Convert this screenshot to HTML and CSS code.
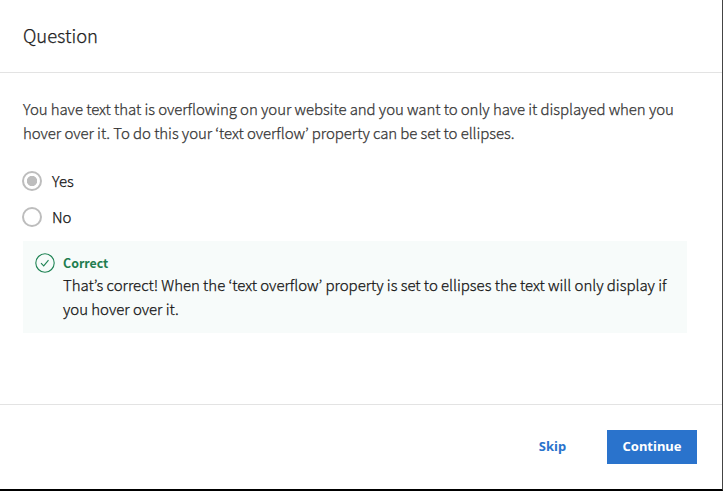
FILE: index.html
```html
<!DOCTYPE html>
<html lang="en">
<head>
<meta charset="utf-8">
<title>Question</title>
<link rel="stylesheet" href="styles.css">
</head>
<body>
<main class="dialog">
  <header class="header"><h1>Question</h1></header>
  <section class="body">
    <p class="prompt">You have text that is overflowing on your website and you want to only have it displayed when you<br>hover over it. To do this your ‘text overflow’ property can be set to ellipses.</p>
    <div class="options">
      <div class="option"><span class="radio radio-on"></span><span>Yes</span></div>
      <div class="option"><span class="radio"></span><span>No</span></div>
    </div>
    <div class="feedback">
      <svg class="check" viewBox="0 0 20 20" width="20" height="20"><circle cx="10" cy="10" r="9.2"/><path d="M6 10.2l2.7 2.7 4.8-5.7"/></svg>
      <div>
        <strong>Correct</strong>
        <p>That’s correct! When the ‘text overflow’ property is set to ellipses the text will only display if<br>you hover over it.</p>
      </div>
    </div>
  </section>
  <footer class="footer">
    <button class="skip">Skip</button>
    <button class="continue">Continue</button>
  </footer>
</main>
</body>
</html>
```
FILE: styles.css
```css
* { box-sizing: border-box; }
body { margin: 0; background: #fff; color: #333; font-family: "Noto Sans CJK KR", "Noto Sans", sans-serif; font-size: 15px; font-weight: 300; line-height: 24px; }
h1, p { margin: 0; font-weight: 300; }
h1, p, .option { -webkit-text-stroke: 0.25px currentColor; }
.dialog { height: 491px; display: flex; flex-direction: column; border-right: 1px solid #444; border-bottom: 2px solid #000; }
.header { height: 73px; padding: 21px 23px; border-bottom: 1px solid #e3e3e3; }
h1 { color: #222; font-size: 18.4px; line-height: 28px; }
.body { height: 331px; padding: 24px 35px 0 22px; }
.prompt { margin-left: 1px; white-space: nowrap; letter-spacing: -0.068px; font-variant-ligatures: normal; }
.options { padding-top: 24px; color: #111; }
.option { display: flex; align-items: center; gap: 10px; height: 24px; margin-bottom: 12px; }
.radio { width: 20px; height: 20px; border: 2px solid #bdbdbd; border-radius: 50%; }
.radio-on { background: radial-gradient(circle, #bdbdbd 4.8px, #fff 5.5px); }
.feedback { display: flex; gap: 8px; height: 92px; margin-left: 1px; padding: 12px; background: #f7fbfa; color: #111; white-space: nowrap; }
.feedback p { letter-spacing: -0.035px; }
.check { flex: none; fill: none; stroke: #1f8354; stroke-width: 1.1; }
.feedback strong { display: block; color: #1f7d50; font-size: 12.4px; font-weight: 700; line-height: 20px; }
.footer { flex: 1; display: flex; justify-content: flex-end; padding: 25px 25px 0; border-top: 1px solid #e3e3e3; }
button { height: 34px; border: 0; padding: 0 0 2px; font: 700 13px "Noto Sans", sans-serif; }
.skip { width: 109px; background: none; color: #2a73cc; }
.continue { width: 90px; background: #2a73cc; color: #fff; }
```
